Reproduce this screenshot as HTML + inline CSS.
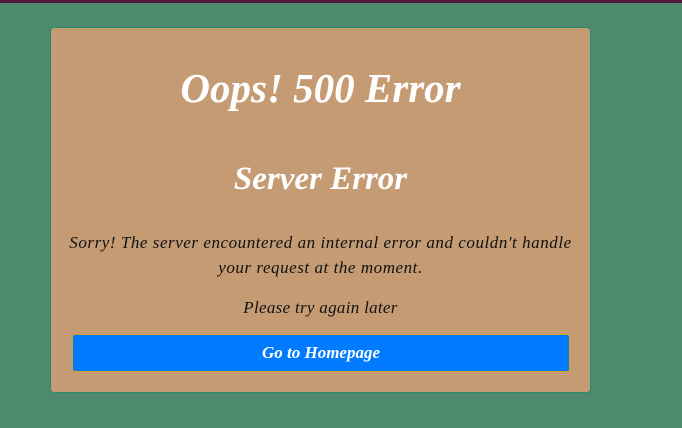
<!DOCTYPE html>
<html><head><style>
body{margin:0;width:682px;height:428px;background:#4e8a6e;position:relative;overflow:hidden;font-family:"Liberation Serif",serif;font-style:italic}
.top{position:absolute;left:0;top:0;width:682px;height:3px;background:#4f1a3a}
.card{position:absolute;left:50px;top:27px;width:539px;height:364px;background:#c49b73;border:1px solid #2e8a70;border-radius:4px}
.t{position:absolute;left:0;width:100%;text-align:center;color:#fff}
.btn{position:absolute;left:21px;top:306px;width:496px;height:36px;background:#007bff;border:1px solid #d4a020;border-radius:3px;color:#fff;text-align:center;line-height:36px;font-size:17px;font-weight:bold}
</style></head><body>
<div class="top"></div>
<div class="card">
<div class="t" style="top:35px;font-size:41px;line-height:50px;font-weight:bold">Oops! 500 Error</div>
<div class="t" style="top:131px;font-size:33px;line-height:40px;font-weight:bold">Server Error</div>
<div class="t" style="top:202px;font-size:17px;line-height:25px;color:#111;letter-spacing:0.55px">Sorry! The server encountered an internal error and couldn't handle<br>your request at the moment.</div>
<div class="t" style="top:267px;font-size:17px;line-height:25px;color:#111;letter-spacing:0.3px">Please try again later</div>
<div class="btn">Go to Homepage</div>
</div>
</body></html>
